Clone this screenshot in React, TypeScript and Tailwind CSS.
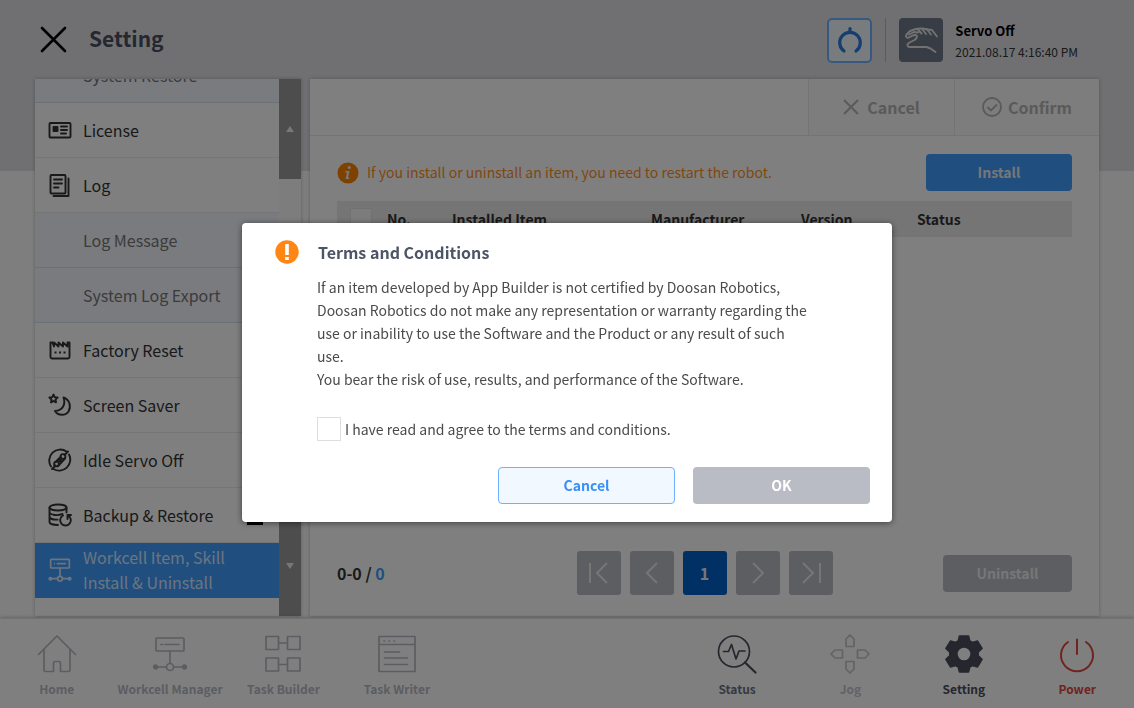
import { useState, type ReactNode } from "react";

interface MenuEntry {
  label: string;
  icon?: ReactNode;
  sub?: boolean;
  active?: boolean;
  badge?: boolean;
}

const WorkcellPath = () => (
  <>
    <rect x="4" y="2" width="28" height="13" rx="1" />
    <path d="M9 8.5h1.500M13 8.500h14M18 15v12M4 31h10M22 31h10" />
    <circle cx="18" cy="31" r="3.500" />
    <circle cx="3.500" cy="31" r="1.800" fill="currentColor" />
    <circle cx="32.500" cy="31" r="1.800" fill="currentColor" />
  </>
);

function MenuIcon({ children }: { children: ReactNode }) {
  return (
    <svg
      viewBox="0 0 24 24"
      className="h-6 w-6 shrink-0"
      fill="none"
      stroke="currentColor"
      strokeWidth="1.900"
      strokeLinejoin="round"
      strokeLinecap="round"
    >
      {children}
    </svg>
  );
}

const MENU: MenuEntry[] = [
  { label: "System Restore", sub: true },
  {
    label: "License",
    icon: (
      <MenuIcon>
        <rect x="1.500" y="5" width="21" height="14.500" rx="1" />
        <rect x="5.500" y="9" width="4" height="4" fill="currentColor" />
        <path d="M13 8.500h6M13 12h6M13 15.500h5" />
      </MenuIcon>
    ),
  },
  {
    label: "Log",
    icon: (
      <MenuIcon>
        <rect x="2.500" y="2" width="15" height="18.500" rx="1" />
        <path d="M6 6.500h8M6 10.500h8M6 14.500h4.500" />
        <path d="M20.500 5.500v17.500H5.500" />
      </MenuIcon>
    ),
  },
  { label: "Log Message", sub: true },
  { label: "System Log Export", sub: true },
  {
    label: "Factory Reset",
    icon: (
      <MenuIcon>
        <path d="M2.500 4.500v14.500a1.500 1.500 0 0 0 1.500 1.500h16a1.500 1.500 0 0 0 1.500-1.500V4.500h-2v4l-4.500-4v4l-4.500-4v4l-4.500-4v4l-1.500-4z" />
        <path d="M6.500 14.500h2M11 14.500h2M15.500 14.500h2" strokeWidth="2.200" strokeLinecap="butt" />
      </MenuIcon>
    ),
  },
  {
    label: "Screen Saver",
    icon: (
      <MenuIcon>
        <path d="M15.500 4.500c2.500 7-1 13-8.500 13.500 3 5 10.500 5 13.500 0.500C23.500 13 21.500 6.500 15.500 4.500z" />
        <path d="M5.500 1.500l1.200 2.600 2.900.4-2.100 2 .5 2.900-2.500-1.400-2.500 1.400.5-2.900-2.100-2 2.900-.4z" />
      </MenuIcon>
    ),
  },
  {
    label: "Idle Servo Off",
    icon: (
      <MenuIcon>
        <path d="M3 18.500A11 11 0 0 1 18.500 3.500M21 6.500A11 11 0 0 1 5.500 21" />
        <circle cx="15" cy="8.500" r="2.400" />
        <circle cx="8.500" cy="16" r="2.400" />
        <path d="M12.500 9l-5 5M17 10.500l-6.500 7M16.500 7l3.500-3.500M7.500 17.500l-3.500 3.500" />
        <circle cx="12" cy="12.500" r="1" />
      </MenuIcon>
    ),
  },
  {
    label: "Backup & Restore",
    badge: true,
    icon: (
      <MenuIcon>
        <ellipse cx="10" cy="4.500" rx="8.500" ry="3" />
        <path d="M1.500 4.500v14.500c0 1.800 4 3 8.500 3M18.500 4.500v5M1.500 9.500c1 2.500 8 3.500 13 1.500M1.500 14c1 2 4.500 2.800 8 2.600" />
        <path d="M15 12.500a5.300 5.300 0 1 0 5 0M19.500 16v-4h3.500" />
      </MenuIcon>
    ),
  },
  {
    label: "Workcell Item, Skill Install & Uninstall",
    active: true,
    icon: (
      <svg viewBox="0 0 36 36" className="h-6 w-6 shrink-0" fill="none" stroke="currentColor" strokeWidth="2.500">
        <WorkcellPath />
      </svg>
    ),
  },
];

const COLUMNS = [
  { label: "No.", width: "w-[65px]" },
  { label: "Installed Item", width: "w-[199px]" },
  { label: "Manufacturer", width: "w-[150px]" },
  { label: "Version", width: "w-[116px]" },
  { label: "Status", width: "" },
];

function NavIcon({ children, width = 1.7 }: { children: ReactNode; width?: number }) {
  return (
    <svg
      viewBox="0 0 40 40"
      className="h-10 w-10"
      fill="none"
      stroke="currentColor"
      strokeWidth={width}
      strokeLinejoin="round"
      strokeLinecap="round"
    >
      {children}
    </svg>
  );
}

const NAV = [
  {
    label: "Home",
    style: "col-start-1 text-[#b9bbc4]",
    icon: (
      <NavIcon>
        <path d="M1.500 20.500L20 2l18.500 18.500M7 15.500V36a1.500 1.500 0 0 0 1.500 1.500h8V29a1.500 1.500 0 0 1 1.500-1.500h4a1.500 1.500 0 0 1 1.500 1.500v8.500h8A1.500 1.500 0 0 0 33 36V15.500" />
      </NavIcon>
    ),
  },
  {
    label: "Workcell Manager",
    style: "col-start-2 text-[#b9bbc4]",
    icon: (
      <NavIcon>
        <g transform="translate(2 2)">
          <WorkcellPath />
        </g>
      </NavIcon>
    ),
  },
  {
    label: "Task Builder",
    style: "col-start-3 text-[#b9bbc4]",
    icon: (
      <NavIcon>
        <path d="M3 2.500h12.500v13H3zM24.500 2.500H37v13H24.500zM3 24h12.500v13H3zM24.500 24H37v13H24.500zM15.500 9h9M15.500 30.500h9" />
      </NavIcon>
    ),
  },
  {
    label: "Task Writer",
    style: "col-start-4 text-[#b9bbc4]",
    icon: (
      <NavIcon>
        <path d="M2 2.500h36v35H2zM2 10.500h36M7 7h.5M12 7h.5M17 7h.5M7.500 18h15M7.500 24h23M7.500 30.500h23" />
      </NavIcon>
    ),
  },
  {
    label: "Status",
    style: "col-start-7 text-[#6f7384]",
    icon: (
      <NavIcon>
        <g stroke="#4a4d5c">
          <circle cx="17" cy="17.500" r="15.500" />
          <path d="M28 28.500L38.500 38.500" strokeWidth="2.200" />
          <path d="M6.500 17.500h5l3-7 4.500 14.500 3-8h6" />
        </g>
      </NavIcon>
    ),
  },
  {
    label: "Jog",
    style: "col-start-8 text-[#c4c6cc]",
    icon: (
      <NavIcon>
        <path d="M20 1l4 4v7.500h-8V5zM20 39l-4-4v-7.500h8V35zM1 20l4-4h7.500v8H5zM39 20l-4 4h-7.500v-8H35z" />
      </NavIcon>
    ),
  },
  {
    label: "Setting",
    style: "col-start-9 text-[#4a4d5c]",
    icon: (
      <NavIcon>
        <path
          fill="currentColor"
          fillRule="evenodd"
          d="M15.500 2h9l1.200 5 2.800 1.600 5-1.500 4.500 7.400-3.900 3.600v3.600l3.900 3.600-4.500 7.600-5-1.500-2.800 1.600-1.200 4.900h-9l-1.200-4.900-2.800-1.600-5 1.500L2 25.300l3.900-3.600v-3.600L2 14.500l4.500-7.400 5 1.500L14.300 7zM20 12.800a7.200 7.200 0 1 0 0 14.400 7.200 7.200 0 0 0 0-14.400z"
        />
      </NavIcon>
    ),
  },
  {
    label: "Power",
    style: "col-start-10 text-[#e0483f]",
    icon: (
      <NavIcon width={2}>
        <path d="M11 8a16 16 0 1 0 18 0M20 5.500v14.500" />
      </NavIcon>
    ),
  },
];

function Header() {
  return (
    <header className="flex h-[79px] shrink-0 items-center pr-[56px] pl-[40px]">
      <button aria-label="Close" className="text-black">
        <svg viewBox="0 0 27 27" className="h-[27px] w-[27px]" stroke="currentColor" strokeWidth="2.600" strokeLinecap="round">
          <path d="M2 2l23 23M25 2L2 25" />
        </svg>
      </button>
      <h1 className="ml-[22px] pb-[2px] text-[21px] font-bold text-[#4a5060]">Setting</h1>
      <div className="ml-auto flex items-center pt-px">
        <button aria-label="Tool" className="flex h-[45px] w-[45px] items-center justify-center rounded-[5px] border-2 border-[#6fb1ff] bg-[#f2f8ff]">
          <svg viewBox="0 0 28 28" className="h-7 w-7" fill="none" stroke="#2a7be0" strokeWidth="3.200" strokeLinecap="round">
            <path d="M8 25A10.300 10.300 0 1 1 20 25" />
            <path d="M14 2.500v4" />
          </svg>
        </button>
        <span className="mr-[13px] ml-[13px] h-[44px] w-px bg-[#b8b8bc]" />
        <button aria-label="Hand guiding" className="h-[44px] w-[44px] rounded-[4px] bg-[#70788a]">
          <svg viewBox="0 0 44 44" className="h-full w-full" fill="none" stroke="#e4e4e4" strokeWidth="1.900" strokeLinecap="round" strokeLinejoin="round">
            <path d="M38 18.500l-5-6.500-4-.5c-4-1-8-1.500-12-.5l-6 2-3.500 3.500c-1.500 2 .5 4 2.500 3l3.500-2c3-1 4.500-.5 4.500 1s-1 2.500-2.500 3.500l-5 2.500c-3.500 2-2 5 1 4.500h16l4 1.500 5 3.500" />
            <path d="M19 11.500l3.500 4M23.500 11.500l3.500 4.500M28 11.500l4 5M10 16.500l5-2.500 4 .5" />
          </svg>
        </button>
        <div className="ml-[12px] pt-px leading-[21px]">
          <p className="text-[13px] font-bold text-black">Servo Off</p>
          <p className="text-[12px] text-[#333]">2021.08.17 4:16:40 PM</p>
        </div>
      </div>
    </header>
  );
}

function Sidebar() {
  return (
    <aside className="flex w-[266px] shrink-0 overflow-hidden bg-white shadow-[0_0_4px_rgba(0,0,0,0.25)]">
      <ul className="-mt-[31px] flex-1">
        {MENU.map((item) => (
          <li key={item.label}>
            <button
              className={
                "flex h-[55px] w-full items-center border-b text-left text-[16px] leading-[25px] " +
                (item.active
                  ? "border-[#409cff] bg-[#409cff] pr-8 pl-[13px] text-[#d9eaff]"
                  : item.sub
                    ? "border-[#d5e0f0] bg-[#f5f7fd] pl-[48px] text-[#777]"
                    : "border-[#ebebeb] bg-white pr-4 pl-[13px] text-[#333]")
              }
            >
              {item.icon}
              <span className={item.icon ? "ml-[11px]" : ""}>{item.label}</span>
              {item.badge && <span className="ml-auto h-[20px] w-4 bg-black" />}
            </button>
          </li>
        ))}
      </ul>
      <div className="flex w-[22px] flex-col justify-between bg-[#fafafa]">
        <button aria-label="Scroll up" className="flex h-[100px] items-center justify-center bg-[#9a9a9a]">
          <svg viewBox="0 0 8 6" className="h-1.5 w-2" fill="#eee">
            <path d="M4 0l4 6H0z" />
          </svg>
        </button>
        <button aria-label="Scroll down" className="flex h-[100px] items-center justify-center bg-[#9a9a9a]">
          <svg viewBox="0 0 8 6" className="h-1.5 w-2" fill="#eee">
            <path d="M0 0h8L4 6z" />
          </svg>
        </button>
      </div>
    </aside>
  );
}

function PageButton({ label, path }: { label: string; path: string }) {
  return (
    <button aria-label={label} className="flex h-[44px] w-[44px] items-center justify-center rounded-[3px] bg-[#b9bcc5] text-[#ececec]">
      <svg viewBox="0 0 24 24" className="h-6 w-6" fill="none" stroke="currentColor" strokeWidth="2">
        <path d={path} />
      </svg>
    </button>
  );
}

function MainPanel() {
  return (
    <main className="flex min-w-0 flex-1 flex-col bg-white shadow-[0_0_4px_rgba(0,0,0,0.25)]">
      <div className="flex h-[57px] justify-end border-b border-[#e8e8e8] text-[16px] font-bold text-[#b4b4b4]">
        <button className="flex w-[146px] items-center justify-center gap-2 border-l border-[#e8e8e8] bg-[#fafafa]">
          <svg viewBox="0 0 16 16" className="h-4 w-4" stroke="currentColor" strokeWidth="2">
            <path d="M1 1l14 14M15 1L1 15" />
          </svg>
          Cancel
        </button>
        <button className="flex w-[145px] items-center justify-center gap-1.5 border-l border-[#e8e8e8] bg-[#fafafa]">
          <svg viewBox="0 0 20 20" className="h-5 w-5" fill="none" stroke="currentColor" strokeWidth="1.900">
            <circle cx="10" cy="10" r="9" />
            <path d="M5.500 10l3.500 3.500 6-6" />
          </svg>
          Confirm
        </button>
      </div>

      <div className="flex flex-1 flex-col px-[27px] pt-[18px] pb-[21px]">
        <div className="flex items-center">
          <svg viewBox="0 0 22 22" className="h-[22px] w-[22px]" fill="#ff8300">
            <circle cx="11" cy="11" r="10.500" />
            <circle cx="12.300" cy="5.500" r="1.600" fill="#eee" />
            <path d="M8.500 9h4l-1.500 6.500h1.500l-.4 1.500H8.500l1.500-6.500H8.200z" fill="#eee" />
          </svg>
          <p className="ml-[8px] text-[14px] text-[#ff8f1f]">
            If you install or uninstall an item, you need to restart the robot.
          </p>
          <button className="ml-auto h-[37px] w-[146px] rounded-[4px] bg-[#409cff] text-[14px] font-bold text-[#eee]">Install</button>
        </div>

        <table className="mt-[10px] w-full table-fixed text-left text-[14px] leading-[20px] text-[#333]">
          <thead>
            <tr className="h-[36px] bg-[#ebebeb]">
              <th className="w-[50px] pl-[13px]">
                <input
                  type="checkbox"
                  aria-label="Select all items"
                  className="block h-[22px] w-[22px] appearance-none border border-[#e2e2e2] bg-[#f8f8f8]"
                />
              </th>
              {COLUMNS.map((c) => (
                <th key={c.label} className={"font-bold " + c.width}>
                  {c.label}
                </th>
              ))}
            </tr>
          </thead>
        </table>

        <div className="mt-auto grid grid-cols-[1fr_auto_1fr] items-center">
          <p className="text-[16px] font-bold text-[#333]">
            0-0 / <span className="text-[#409cff]">0</span>
          </p>
          <div className="flex gap-[9px]">
            <PageButton label="First page" path="M3 2v20M20 2l-10 10 10 10" />
            <PageButton label="Previous page" path="M17 2l-10 10 10 10" />
            <button className="h-[44px] w-[44px] rounded-[3px] bg-[#0061c8] text-[16px] font-bold text-[#eee]">1</button>
            <PageButton label="Next page" path="M7 2l10 10-10 10" />
            <PageButton label="Last page" path="M4 2l10 10-10 10M21 2v20" />
          </div>
          <button className="h-[37px] w-[129px] justify-self-end rounded-[4px] bg-[#b9bcc5] text-[14px] font-bold text-[#eee]">
            Uninstall
          </button>
        </div>
      </div>
    </main>
  );
}

function BottomNav() {
  return (
    <nav className="mt-[2px] grid h-[90px] shrink-0 grid-cols-10 border-t border-[#e4e4e4] bg-white shadow-[0_0_4px_rgba(0,0,0,0.3)]">
      {NAV.map((n) => (
        <button key={n.label} className={"flex flex-col items-center pt-[15px] whitespace-nowrap " + n.style}>
          {n.icon}
          <span className="mt-[5px] text-[12px] leading-[20px] font-bold">{n.label}</span>
        </button>
      ))}
    </nav>
  );
}

function TermsDialog() {
  const [agreed, setAgreed] = useState(false);

  return (
    <div className="fixed inset-0 flex items-center justify-center bg-black/50 pt-[37px]">
      <div
        role="dialog"
        aria-modal="true"
        aria-labelledby="terms-title"
        className="w-full max-w-[650px] rounded-[4px] bg-white pt-[16px] pr-[22px] pb-[18px] pl-[33px] shadow-[0_1px_6px_rgba(0,0,0,0.5)]"
      >
        <div className="flex items-center">
          <svg viewBox="0 0 24 24" className="h-6 w-6" fill="#ff8614">
            <circle cx="12" cy="12" r="11.700" />
            <path d="M10.200 4h3.600v11h-3.600zM10.200 17h3.600v3h-3.600z" fill="#fff" />
          </svg>
          <h2 id="terms-title" className="ml-[19px] text-[16px] leading-[26px] font-bold text-[#4c5466]">
            Terms and Conditions
          </h2>
        </div>
        <div className="mt-[11px] ml-[42px] max-w-[494px] text-[14px] leading-[23px] text-[#4a4a4a]">
          <p>
            If an item developed by App Builder is not certified by Doosan Robotics, Doosan Robotics do not make any
            representation or warranty regarding the use or inability to use the Software and the Product or any result
            of such use.
          </p>
          <p>You bear the risk of use, results, and performance of the Software.</p>
        </div>
        <label className="mt-[26px] ml-[42px] flex items-center gap-[4px] text-[14px] leading-[24px] text-[#4a4a4a]">
          <input
            type="checkbox"
            checked={agreed}
            onChange={(e) => setAgreed(e.target.checked)}
            className="h-6 w-6 appearance-none border border-[#dedede] bg-white checked:bg-[#409cff]"
          />
          I have read and agree to the terms and conditions.
        </label>
        <div className="mt-[26px] flex justify-end gap-[18px] text-[14px] font-bold">
          <button className="h-[37px] w-[177px] rounded-[4px] border border-[#6fb1ff] bg-[#f2f8ff] text-[#3890f5]">
            Cancel
          </button>
          <button disabled={!agreed} className="h-[37px] w-[177px] rounded-[4px] bg-[#409cff] text-white disabled:bg-[#b9bcc5]">
            OK
          </button>
        </div>
      </div>
    </div>
  );
}

export default function App() {
  return (
    <div className="flex min-h-screen flex-col bg-[linear-gradient(#e1e1e6_171px,#fdfdfd_171px)] font-['Noto_Sans_CJK_KR','Noto_Sans',sans-serif]">
      <Header />
      <div className="flex flex-1 gap-[9px] px-[35px]">
        <Sidebar />
        <MainPanel />
      </div>
      <BottomNav />
      <TermsDialog />
    </div>
  );
}
